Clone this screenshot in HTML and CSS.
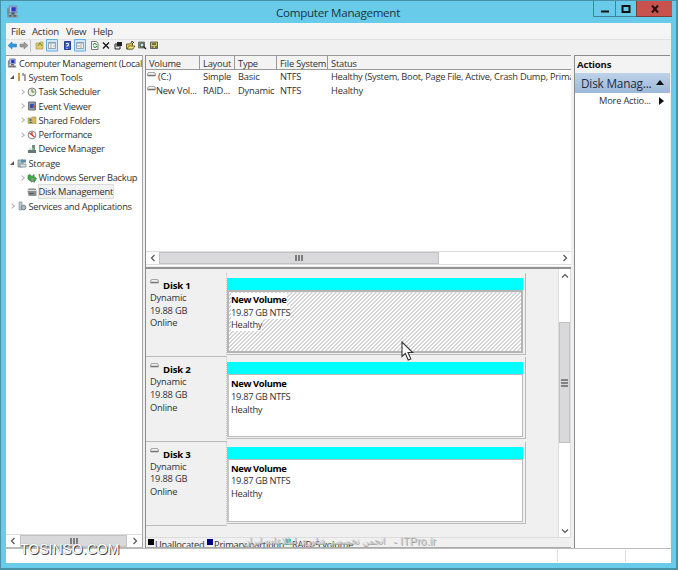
FILE: index.html
```html
<!DOCTYPE html>
<html lang="en">
<head>
<meta charset="utf-8">
<title>Computer Management</title>
<link rel="stylesheet" href="styles.css">
</head>
<body>
<svg class="defs" width="0" height="0">
  <symbol id="pc" viewBox="0 0 12 12"><path d="M3 1h7v6H3z" fill="#b9c4df" stroke="#6b7390" stroke-width=".7"/><path d="M5 2h4v4H5z" fill="#2438c8"/><path d="M1 3h2v6H1z" fill="#7d8898"/><path d="M5 7h3v2H5z" fill="#555"/><path d="M1 9h10v2.500H1z" fill="#8f9399"/><path d="M3 10h2M7 10h2" stroke="#444"/></symbol>
  <symbol id="drive" viewBox="0 0 9 5"><path d="M1.500.5h6l1 1.500v2h-8V2z" fill="#d5d5d5" stroke="#959595" stroke-width=".8"/><path d="M1 3.500h7" stroke="#777"/><path d="M2 1.500h5" stroke="#fff" stroke-width=".7"/></symbol>
</svg>
<div class="window">
  <header class="titlebar">
    <svg class="appicon" viewBox="0 0 12 12"><use href="#pc"/></svg>
    <h1>Computer Management</h1>
    <div class="controls">
      <span class="ctl min"><svg width="10" height="10"><path d="M1 7.500h8" stroke="#111" stroke-width="2"/></svg></span>
      <span class="ctl max"><svg width="10" height="10"><path d="M1.500 2h7v6h-7z" fill="none" stroke="#111" stroke-width="2"/></svg></span>
      <span class="ctl close"><svg width="10" height="10"><path d="M2 1.500l6 7M8 1.500l-6 7" stroke="#2a1010" stroke-width="2"/></svg></span>
    </div>
  </header>
  <main class="client">
    <nav class="menu"><span class="m1">File</span><span class="m2">Action</span><span class="m3">View</span><span>Help</span></nav>
    <div class="toolbar">
      <svg width="165" height="14" viewBox="6 39 165 14">
        <path d="M8 45.500l4-3.500v2h4.500v3H12v2z" fill="#2f9ae0" stroke="#1976b8" stroke-width=".5"/>
        <path d="M28 45.500l-4-3.500v2h-4v3h4v2z" fill="#999" stroke="#777" stroke-width=".5"/>
        <path d="M30.500 40v12" stroke="#c4c4c4"/>
        <path d="M36 43h3l1-1h3v7h-7z" fill="#e4ca72" stroke="#a58c43" stroke-width=".6"/><path d="M38 46l2-3 2 3" fill="none" stroke="#4d9a30"/>
        <path d="M46.500 39.500h11v11.500h-11z" fill="#cfe8fa" stroke="#65ace0"/><path d="M48.500 42.500h7v6h-7z" fill="#f3f3ee" stroke="#8793a0" stroke-width=".8"/><path d="M48.500 43h7" stroke="#7c98b5"/><path d="M51 44v4M53 46h2" stroke="#aaa"/>
        <path d="M64.500 41.500h6v8h-6z" fill="#3b5fc4" stroke="#273f93"/><path d="M66 43.500h2.500v2H67v1.500M67 48v1" fill="none" stroke="#fff" stroke-width=".9"/>
        <path d="M74.500 39.500h11v11.500h-11z" fill="#cfe8fa" stroke="#65ace0"/><path d="M76.500 42.500h7v6h-7z" fill="#f3f3ee" stroke="#8793a0" stroke-width=".8"/><path d="M76.500 43h7" stroke="#7c98b5"/><path d="M81 44v4M77 46h3" stroke="#aaa"/>
        <path d="M91.500 41.500h5l1.500 2v6h-6.500z" fill="#fff" stroke="#555" stroke-width=".8"/><path d="M93 45q2-3 3.500 0M97 46q-2 3-3.500 0" fill="none" stroke="#218b21" stroke-width="1.200"/>
        <path d="M103 42.500l6 6M109 42.500l-6 6" stroke="#151515" stroke-width="1.300"/>
        <path d="M115 44h5v5h-5z" fill="#eee" stroke="#222"/><path d="M117 42h5v4h-5z" fill="#222"/><path d="M116 46h3" stroke="#222"/>
        <path d="M126.500 44h3l1-1h2v6h-6z" fill="#dfc64a" stroke="#4b4612" stroke-width=".8"/><path d="M127 49l2-3h6l-2 3z" fill="#f3e47a" stroke="#4b4612" stroke-width=".7"/><path d="M131 42q2-1.500 3 1" fill="none" stroke="#222"/>
        <path d="M138.500 42h6v6h-6z" fill="#8aa04a" stroke="#555" stroke-width=".7"/><circle cx="142" cy="45" r="2" fill="#b8e3ee" stroke="#333" stroke-width=".8"/><path d="M143.500 46.500l2.500 2.500" stroke="#222" stroke-width="1.300"/>
        <path d="M150.500 42h7v6.500h-7z" fill="#c9c46a" stroke="#444" stroke-width=".8"/><path d="M152 44h2M155 43v2M151.500 47h2M155 47h2" stroke="#222"/>
      </svg>
    </div>
    <div class="panes">
      <section class="treepane">
        <ul class="tree">
          <li class="root"><svg class="ic" viewBox="0 0 12 12"><use href="#pc"/></svg><span>Computer Management (Local</span></li>
          <li class="l1 open"><i></i><svg class="ic" viewBox="0 0 10 10"><path d="M2 1v8" stroke="#c8a43c" stroke-width="2"/><path d="M6 1v2h2v6" fill="none" stroke="#8c8c8c" stroke-width="1.600"/></svg><span>System Tools</span></li>
          <li class="l2 shut"><i></i><svg class="ic" viewBox="0 0 10 10"><circle cx="5" cy="5" r="4" fill="#e8ecd8" stroke="#7f8588"/><path d="M5 2v3h2.500" fill="none" stroke="#537d45"/></svg><span>Task Scheduler</span></li>
          <li class="l2 shut"><i></i><svg class="ic" viewBox="0 0 10 10"><path d="M1.500 1h7v8h-7z" fill="#8b9bb7" stroke="#777"/><path d="M3 3h4v4H3z" fill="#3c4dad"/><path d="M6 4h2v3H6z" fill="#b05c52"/></svg><span>Event Viewer</span></li>
          <li class="l2 shut"><i></i><svg class="ic" viewBox="0 0 10 10"><path d="M1 3h3l1-1h4v6.500H1z" fill="#d9b95e" stroke="#9b894e" stroke-width=".6"/><circle cx="3.500" cy="5" r="1.200" fill="#397e9e"/><path d="M2 8q1.500-3 3.500 0" fill="#54734d"/></svg><span>Shared Folders</span></li>
          <li class="l2 shut"><i></i><svg class="ic" viewBox="0 0 10 10"><circle cx="5" cy="5" r="3.900" fill="#fff" stroke="#858585"/><path d="M2.500 3l5 4M5 2v3" stroke="#cb3535" stroke-width="1.300"/></svg><span>Performance</span></li>
          <li class="l2"><i></i><svg class="ic" viewBox="0 0 10 10"><path d="M5 1h3v5H5z" fill="#7c8d7b"/><path d="M1 6h8v3H1z" fill="#687579"/><path d="M2 5h5" stroke="#9da"/></svg><span>Device Manager</span></li>
          <li class="l1 open"><i></i><svg class="ic" viewBox="0 0 10 10"><path d="M1 2h5v7H1z" fill="#afbec5" stroke="#69838b" stroke-width=".7"/><path d="M4 1.500h5v3H4z" fill="#598fb4"/><path d="M3 6h6v3H3z" fill="#d7dde0" stroke="#77858a" stroke-width=".7"/></svg><span>Storage</span></li>
          <li class="l2 shut"><i></i><svg class="ic" viewBox="0 0 10 10"><path d="M1 2.500l2-1 2 2 2-2v2l2.500 2L7 9.500V8L4.500 9 1 6z" fill="#3cab3e" stroke="#28752d" stroke-width=".6"/><path d="M4.500 5h2v3h-2z" fill="#9a9a9a"/></svg><span>Windows Server Backup</span></li>
          <li class="l2"><i></i><svg class="ic" viewBox="0 0 10 10"><path d="M1.500 1.500h7l1 2v5.500h-8l-1-5z" fill="#8d8d8d"/><path d="M1 3.500h8" stroke="#e2e2e2"/><path d="M2 6.500h5" stroke="#555"/></svg><span class="selected">Disk Management</span></li>
          <li class="l1 shut"><i></i><svg class="ic" viewBox="0 0 10 10"><path d="M2 1h3v8H2z" fill="#b9c7ce" stroke="#87959c" stroke-width=".7"/><circle cx="6.500" cy="6.500" r="2.300" fill="#a9bac5" stroke="#6b8394"/></svg><span>Services and Applications</span></li>
        </ul>
        <div class="hscroll"><b class="arrow"><svg width="6" height="8"><path d="M4.500 1L1.500 4l3 3" /></svg></b><b class="thumb"><svg width="8" height="6"><path d="M1 0v6M4 0v6M7 0v6"/></svg></b><b class="gap"></b><b class="arrow"><svg width="6" height="8"><path d="M1.500 1l3 3-3 3"/></svg></b></div>
      </section>
      <section class="middle">
        <div class="volumes">
          <div class="vrow vhead"><span>Volume</span><span>Layout</span><span>Type</span><span>File System</span><span>Status</span></div>
          <div class="vrow"><span class="name sp"><svg width="9" height="5"><use href="#drive"/></svg>(C:)</span><span>Simple</span><span>Basic</span><span>NTFS</span><span class="long">Healthy (System, Boot, Page File, Active, Crash Dump, Prima</span></div>
          <div class="vrow"><span class="name"><svg width="9" height="5"><use href="#drive"/></svg>New Vol...</span><span>RAID...</span><span>Dynamic</span><span>NTFS</span><span>Healthy</span></div>
          <div class="hscroll wide"><b class="arrow"><svg width="6" height="8"><path d="M4.500 1L1.500 4l3 3" /></svg></b><b class="thumb"><svg width="8" height="6"><path d="M1 0v6M4 0v6M7 0v6"/></svg></b><b class="gap"></b><b class="arrow"><svg width="6" height="8"><path d="M1.500 1l3 3-3 3"/></svg></b></div>
        </div>
        <div class="graph">
          <div class="disks">
            <article class="disk"><div class="label"><strong><svg width="9" height="5"><use href="#drive"/></svg>Disk 1</strong><p>Dynamic</p><p>19.88 GB</p><p>Online</p></div><div class="track"><div class="cyan"></div><div class="vol hatch"><p><b>New Volume</b></p><p><span>19.87 GB NTFS</span></p><p><span>Healthy</span></p></div></div></article>
            <article class="disk"><div class="label"><strong><svg width="9" height="5"><use href="#drive"/></svg>Disk 2</strong><p>Dynamic</p><p>19.88 GB</p><p>Online</p></div><div class="track"><div class="cyan"></div><div class="vol"><p><b>New Volume</b></p><p><span>19.87 GB NTFS</span></p><p><span>Healthy</span></p></div></div></article>
            <article class="disk"><div class="label"><strong><svg width="9" height="5"><use href="#drive"/></svg>Disk 3</strong><p>Dynamic</p><p>19.88 GB</p><p>Online</p></div><div class="track"><div class="cyan"></div><div class="vol"><p><b>New Volume</b></p><p><span>19.87 GB NTFS</span></p><p><span>Healthy</span></p></div></div></article>
          </div>
          <div class="vscroll"><b class="arrow"><svg width="8" height="6"><path d="M1 4.500l3-3 3 3"/></svg></b><b class="space"></b><b class="thumb"><svg width="7" height="8"><path d="M0 1h7M0 4h7M0 7h7"/></svg></b><b class="rest"></b><b class="arrow"><svg width="8" height="6"><path d="M1 1.500l3 3 3-3"/></svg></b></div>
        </div>
        <div class="legend"><i class="k"></i><span class="g1">Unallocated</span><i class="n"></i><span class="g2">Primary partition</span><i class="c"></i><span>RAID-5 volume</span></div>
      </section>
      <aside class="actions">
        <h2>Actions</h2>
        <div class="group"><span>Disk Manag...</span><svg width="8" height="6"><path d="M4 0l4 5H0z" fill="#111"/></svg></div>
        <div class="more"><span>More Actio...</span><svg width="5" height="8"><path d="M0 0l5 4-5 4z" fill="#111"/></svg></div>
      </aside>
    </div>
    <footer class="status"><i></i><i></i><i></i></footer>
  </main>
  <svg class="cursor" width="14" height="21" viewBox="0 0 14 21"><path d="M1 1v14.500l3.300-3.100 2.900 6.600 2.600-1.100L7 11.500h4.700z" fill="#fff" stroke="#333" stroke-width="1.100"/></svg>
  <div class="mark tosinso">TOSINSO.COM</div>
  <div class="mark itpro"><bdi class="fa" lang="fa">انجمن تخصصی فناوری اطلاعات ایران</bdi><span>- ITPro.ir</span></div>
</div>
</body>
</html>
```

FILE: styles.css
```css
* { box-sizing: border-box; }
body { margin: 0; width: 678px; height: 570px; overflow: hidden; font: 9.3px/14px "Open Sans", "Noto Sans", sans-serif; color: #303030; letter-spacing: -.2px; }
h1, h2, p, ul { margin: 0; padding: 0; font-weight: 400; }
ul { list-style: none; }
b.arrow, b.thumb { display: flex; align-items: center; justify-content: center; }
.defs { position: absolute; }
.window { position: relative; width: 678px; height: 570px; background: #68cbea; border: solid #4b91a6; border-width: 1px 2px 2px 1px; padding: 0 5px 5px; display: flex; flex-direction: column; }
.titlebar { height: 22px; display: flex; justify-content: space-between; flex: none; }
.appicon { width: 13px; height: 13px; margin: 4px 0 0 0; }
h1 { font-size: 11.6px; line-height: 23px; color: #173540; letter-spacing: -.28px; margin-left: 257px; margin-right: auto; }
.controls { display: flex; height: 16px; margin-right: -1px; }
.ctl { width: 21px; border: solid #3f8299; border-width: 0 0 1px 1px; display: flex; align-items: center; justify-content: center; }
.min { width: 22px; }
.close { width: 36px; background: #c7524e; border-color: #7e3d3c; }
.client { flex: 1; min-height: 0; background: #f0f0f0; display: flex; flex-direction: column; }
.menu { height: 17px; display: flex; padding-left: 5px; font-size: 9.6px; line-height: 17px; flex: none; border-bottom: 1px solid #e2e2e2; background: #f5f5f5; }
.m1 { width: 21px; } .m2 { width: 34px; } .m3 { width: 27px; }
.toolbar { height: 15px; flex: none; margin-top: -1px; margin-bottom: 1px; }
.toolbar svg { display: block; }
.panes { height: 493px; display: flex; flex: none; }
.treepane { width: 137px; background: #fff; border-top: 1px solid #999; border-right: 1px solid #a5a5a5; border-bottom: 1px solid #bbb; display: flex; flex-direction: column; overflow: hidden; flex: none; }
.tree { flex: 1; letter-spacing: -.25px; }
.tree li { height: 14.3px; display: flex; align-items: center; white-space: nowrap; }
.tree span { line-height: 13px; }
.root span { letter-spacing: -.32px; }
.ic { width: 10px; height: 10px; flex: none; margin-right: 2px; }
.root .ic { margin-left: 1px; }
.tree i { width: 8px; height: 8px; flex: none; display: flex; align-items: center; }
.l1 { padding-left: 3px; } .l2 { padding-left: 13px; }
.l1 .ic { margin-left: 0; margin-right: 1.500px; }
.l2 .ic { margin-right: 1.500px; }
.open i::before { content: ""; margin-left: 1px; border: 2px solid transparent; border-right-color: #555; border-bottom-color: #555; }
.shut i::before { content: ""; margin-left: 1px; width: 3px; height: 3px; border: solid #b5b5b5; border-width: 1px 1px 0 0; transform: rotate(45deg); }
.selected { background: #f2f2f2; outline: 1px solid #dcdcdc; }
.hscroll { height: 13px; display: flex; background: #fff; border-top: 1px solid #ddd; flex: none; }
.arrow { width: 14px; background: #fff; flex: none; }
.arrow path { fill: none; stroke: #555; stroke-width: 1.2; }
.thumb { background: #d9d9db; border: 1px solid #c2c2c2; flex: none; width: 107px; }
.thumb path { stroke: #666; stroke-width: 1.6; }
.gap { flex: 1; }
.middle { width: 426px; margin-left: 2px; border-left: 1px solid #8c8c8c; border-top: 1px solid #999; background: #f0f0f0; display: flex; flex-direction: column; flex: none; }
.volumes { height: 210px; background: #fff; display: flex; flex-direction: column; flex: none; overflow: hidden; }
.vrow { display: grid; grid-template-columns: 54px 35px 42px 51px 1fr; height: 13.500px; line-height: 13.500px; white-space: nowrap; overflow: hidden; flex: none; }
.vrow span { padding-left: 3px; }
.vhead { height: 14px; line-height: 15px; background: #f3f3f3; border-bottom: 1px solid #999; }
.vhead span { border-right: 1px solid #999; }
.vhead span:last-child { border: 0; }
.vrow .long { letter-spacing: -.25px; }
.vrow .name { padding-left: 1px; }
.name svg { vertical-align: 3px; }
.sp svg { margin-right: 2px; }
.wide { margin-top: auto; margin-bottom: 1px; height: 14px; border-bottom: 1px solid #ddd; }
.wide .arrow { width: 13px; } .wide .thumb { width: 280px; }
.graph { height: 270px; display: flex; border-top: 2px solid #929292; margin-top: 1px; overflow: hidden; flex: none; }
.disks { width: 412px; padding-top: 4px; }
.disk { height: 84.3px; display: flex; width: 380px; }
.label { width: 81px; padding: 6px 0 0 4px; line-height: 12.700px; border-right: 1px dotted #ccc; border-bottom: 1px solid #bbb; }
.label strong { display: block; color: #000; font-size: 9.6px; line-height: 13px; }
.label strong svg { margin-right: 4px; vertical-align: 5px; }
.track { width: 299px; height: 82px; padding-top: 5px; border: solid #bbb; border-width: 0 1px 1px 0; }
.cyan { width: 296px; height: 12px; background: #0ff; }
.vol { width: 296px; height: 63px; border: 1px solid #bbb; border-left: 2px solid #c4c4c4; background: #fff; padding: 3px 0 0 2px; line-height: 12.700px; letter-spacing: -.3px; }
.vol b { color: #000; font-size: 9.4px; letter-spacing: -.38px; }
.hatch { border: 2px solid #b5b5b5; padding: 2px 0 0 2px; background: repeating-linear-gradient(135deg, #fff 0 1.900px, #d4d4d4 1.900px 2.830px); }
.hatch b, .hatch span { background: #fff; }
.vscroll { width: 13px; display: flex; flex-direction: column; background: #fff; border: solid #ddd; border-width: 0 1px; }
.vscroll .arrow { width: 11px; height: 13px; }
.space { height: 40px; } .rest { flex: 1; }
.vscroll .thumb { width: 11px; height: 121px; }
.legend { height: 11px; border-top: 1px solid #ddd; border-bottom: 1px solid #aaa; overflow: hidden; display: flex; white-space: nowrap; padding-left: 2px; line-height: 13px; }
.legend i { width: 6px; height: 6px; margin: 1px 1px 0 0; flex: none; }
.k { background: #000; } .n { background: #000080; } .c { background: #0cd; }
.g1 { width: 52px; } .g2 { width: 71px; }
.actions { width: 96px; margin-left: 3px; border: solid #8c8c8c; border-width: 1px 0 0 1px; background: #fff; flex: none; }
h2 { height: 17px; line-height: 17px; font-size: 9.6px; font-weight: 700; color: #111; padding-left: 2px; background: #f3f3f3; }
.group { height: 20px; display: flex; align-items: center; justify-content: space-between; padding: 0 6px 0 6px; background: linear-gradient(#bed2e9, #9db8d8); font-size: 11.8px; color: #1f2c3f; }
.more { height: 16px; display: flex; align-items: center; padding: 0 6px 0 24px; justify-content: space-between; }
.status { flex: 1; border-top: 1px solid #bbb; background: #fff; display: flex; }
.status i { border-right: 1px solid #ddd; width: 68px; height: 12px; margin-top: 1px; flex: none; }
.status i:first-child { width: 552px; } .status i:last-child { border: 0; width: 40px; }
.cursor { position: absolute; left: 400px; top: 340px; }
.mark { position: absolute; white-space: nowrap; font-family: "Liberation Sans", "DejaVu Sans", sans-serif; letter-spacing: 0; }
.tosinso { left: 19px; top: 540px; font-size: 14px; line-height: 16px; color: #fff; text-shadow: 1px 1px 0 #444, 0 0 1px #999; }
.itpro { left: 242px; top: 533px; width: 193px; display: flex; justify-content: space-between; font-size: 10.5px; line-height: 14px; color: #ccc; text-shadow: 1px 1px 0 #a5a5a5; }
.itpro span { letter-spacing: .2px; }
.fa { font-family: "DejaVu Sans", sans-serif; font-size: 9px; }
```
